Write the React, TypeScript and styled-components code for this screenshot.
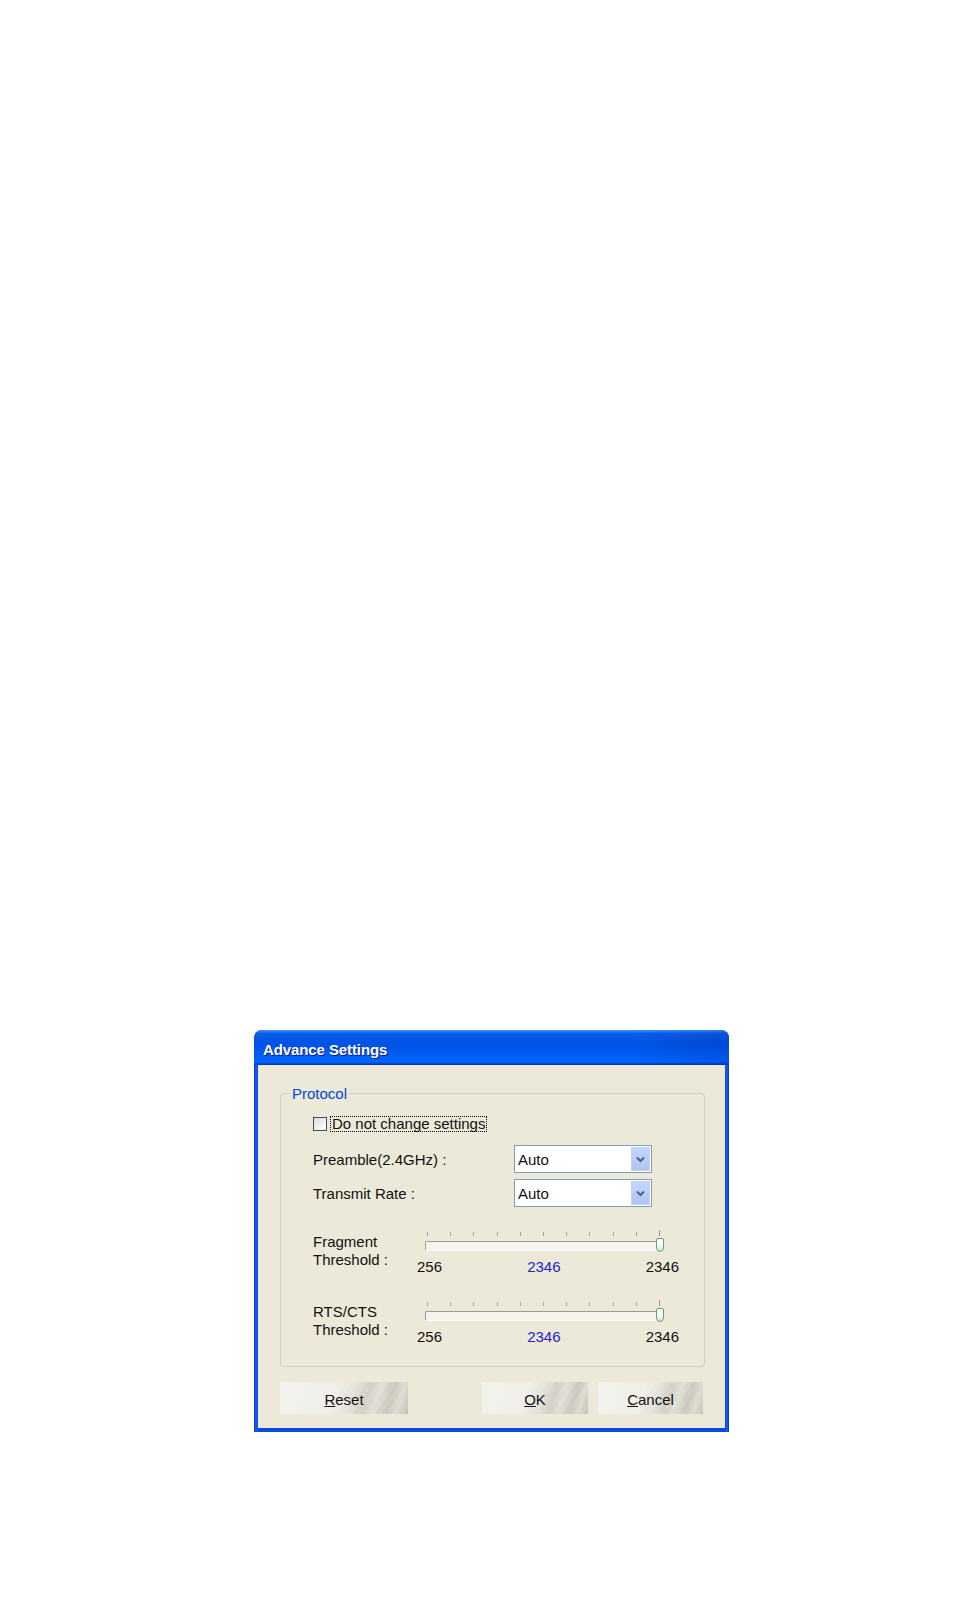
import React from "react";
import styled, { createGlobalStyle } from "styled-components";

const Global = createGlobalStyle`
  html, body { margin: 0; padding: 0; background: #ffffff; }
  body { font-family: "Liberation Sans", Arial, sans-serif; color: #000; }
`;

const Page = styled.div`
  width: 954px;
  min-height: 1612px;
  box-sizing: border-box;
  padding: 1030px 0 0 254px;
  background: #ffffff;
`;

const Window = styled.div`
  width: 475px;
  display: flex;
  flex-direction: column;
  border-radius: 8px 8px 0 0;
  overflow: hidden;
  background: linear-gradient(to right, #0831d9 0px, #1660ee 2px, #0a49e0 4px, #0a49e0 calc(100% - 4px), #1660ee calc(100% - 2px), #0831d9 100%);
`;

const TitleBar = styled.div`
  height: 35px;
  box-sizing: border-box;
  display: flex;
  align-items: center;
  padding: 3px 0 0 9px;
  background:
    linear-gradient(to right, rgba(0, 30, 120, 0) 0%, rgba(0, 30, 120, 0) 80%, rgba(0, 30, 140, 0.18) 100%),
    linear-gradient(to bottom, #3d95ff 0%, #0a5ce8 10%, #0052e6 40%, #0062f8 85%, #0066ff 91%, #0052e0 95%, #0039c8 97%, #0039c8 100%);
  color: #ffffff;
  font-weight: bold;
  font-size: 15px;
  letter-spacing: -0.1px;
  text-shadow: 1px 1px 0 #0a1a8a;
`;

const Body = styled.div`
  margin: 0 4px 4px;
  background: #ece9d8;
  padding: 20px 20px 14px 22px;
  display: flex;
  flex-direction: column;
`;

const Group = styled.fieldset`
  margin: 0;
  padding: 14px 20px 21px 0;
  border: 1px solid #d0d0bf;
  border-radius: 4px;
  min-width: 0;
`;

const Legend = styled.legend`
  margin-left: 9px;
  padding: 0 2px;
  color: #0046d5;
  font-size: 15px;
  line-height: 17px;
`;

const Content = styled.div`
  padding-left: 32px;
  display: flex;
  flex-direction: column;
  font-size: 15px;
  color: #111;
`;

const CheckRow = styled.div`
  height: 16px;
  display: flex;
  align-items: center;
`;

const CheckBox = styled.span`
  width: 14px;
  height: 14px;
  box-sizing: border-box;
  border: 1px solid #3b4f6a;
  background: linear-gradient(135deg, #dcdcd7 0%, #f6f6f3 70%, #ffffff 100%);
`;

const FocusLabel = styled.span`
  margin-left: 3px;
  padding: 0 1px;
  border: 1px dotted #000;
  line-height: 14px;
`;

const FieldRow = styled.div<{ $top: number }>`
  margin-top: ${(p) => p.$top}px;
  height: 28px;
  display: flex;
  align-items: center;
`;

const FieldLabel = styled.span`
  width: 201px;
  line-height: 17px;
`;

const Select = styled.div`
  width: 138px;
  height: 28px;
  box-sizing: border-box;
  border: 1px solid #7f9db9;
  background: #ffffff;
  display: flex;
  align-items: center;
  justify-content: space-between;
  padding: 1px 1px 1px 3px;
`;

const SelectValue = styled.span`
  line-height: 17px;
`;

const SelectButton = styled.span`
  width: 19px;
  height: 24px;
  box-sizing: border-box;
  border: 1px solid #c3d3f7;
  background: linear-gradient(to bottom, #c6d6fb 0%, #b8cbf6 60%, #b0c4f2 100%);
  display: flex;
  align-items: center;
  justify-content: center;
`;

const SliderBlock = styled.div<{ $top: number }>`
  margin-top: ${(p) => p.$top}px;
  display: grid;
  grid-template-columns: 112px 238px;
`;

const SliderLabel = styled.div`
  padding-top: 3px;
  line-height: 18px;
`;

const SliderCol = styled.div`
  display: flex;
  flex-direction: column;
`;

const Ticks = styled.div`
  height: 6px;
  display: flex;
  justify-content: space-between;
  align-items: flex-end;
  padding: 0 3px 0 2px;
`;

const Tick = styled.span<{ $end?: boolean }>`
  width: 1px;
  height: ${(p) => (p.$end ? 6 : 4)}px;
  background: ${(p) => (p.$end ? "#b48c8c" : "#a8a8a0")};
`;

const Track = styled.div`
  position: relative;
  margin-top: 5px;
  height: 10px;
  box-sizing: border-box;
  border-top: 1px solid #9c9c96;
  border-left: 1px solid #9c9c96;
  border-bottom: 1px solid #ffffff;
  border-right: 1px solid #ffffff;
  background: #f4f3ee;
  border-radius: 2px;
`;

const Thumb = styled.span`
  position: absolute;
  right: -2px;
  top: -4px;
  width: 8px;
  height: 14px;
  box-sizing: border-box;
  border: 1px solid #6f9a80;
  border-radius: 2px 2px 4px 4px;
  background: linear-gradient(to bottom, #ffffff 0%, #f3f6f1 60%, #d6e6d8 100%);
`;

const Values = styled.div`
  margin-top: 7px;
  margin-left: -8px;
  width: 262px;
  display: flex;
  justify-content: space-between;
  line-height: 17px;
`;

const Value = styled.span<{ $blue?: boolean }>`
  color: ${(p) => (p.$blue ? "#2424c8" : "#111")};
`;

const ButtonRow = styled.div`
  margin-top: 15px;
  display: flex;
  align-items: center;
  padding-right: 2px;
`;

const Spacer = styled.div`
  flex: 1;
`;

const Button = styled.div<{ $w: number }>`
  width: ${(p) => p.$w}px;
  height: 32px;
  box-sizing: border-box;
  display: flex;
  align-items: center;
  justify-content: center;
  font-size: 15px;
  color: #111;
  padding-top: 3px;
  background:
    repeating-linear-gradient(125deg, rgba(255, 255, 255, 0) 0px, rgba(255, 255, 255, 0) 3px, rgba(255, 255, 255, 0.12) 4px, rgba(255, 255, 255, 0) 6px),
    linear-gradient(108deg, #f3f2ed 0%, #efeee8 42%, #e4e2da 55%, #d2cfc5 66%, #e1dfd7 74%, #cac7bc 84%, #dedbd2 91%, #c3bfb4 100%);
  & + & {
    margin-left: 10px;
  }
`;

const U = styled.span`
  text-decoration: underline;
`;

const Chevron = () => (
  <svg width="9" height="7" viewBox="0 0 9 7">
    <polyline points="1,1.5 4.5,5 8,1.5" fill="none" stroke="#4d6185" strokeWidth="2" />
  </svg>
);

const Slider = ({ top, label1, label2 }: { top: number; label1: string; label2: string }) => (
  <SliderBlock $top={top}>
    <SliderLabel>
      {label1}
      <br />
      {label2}
    </SliderLabel>
    <SliderCol>
      <Ticks>
        {Array.from({ length: 11 }).map((_, i) => (
          <Tick key={i} $end={i === 10} />
        ))}
      </Ticks>
      <Track>
        <Thumb />
      </Track>
      <Values>
        <Value>256</Value>
        <Value $blue>2346</Value>
        <Value>2346</Value>
      </Values>
    </SliderCol>
  </SliderBlock>
);

export default function App() {
  return (
    <Page>
      <Global />
      <Window>
        <TitleBar>Advance Settings</TitleBar>
        <Body>
          <Group>
            <Legend>Protocol</Legend>
            <Content>
              <CheckRow>
                <CheckBox />
                <FocusLabel>Do not change settings</FocusLabel>
              </CheckRow>
              <FieldRow $top={13}>
                <FieldLabel>Preamble(2.4GHz) :</FieldLabel>
                <Select>
                  <SelectValue>Auto</SelectValue>
                  <SelectButton>
                    <Chevron />
                  </SelectButton>
                </Select>
              </FieldRow>
              <FieldRow $top={6}>
                <FieldLabel>Transmit Rate :</FieldLabel>
                <Select>
                  <SelectValue>Auto</SelectValue>
                  <SelectButton>
                    <Chevron />
                  </SelectButton>
                </Select>
              </FieldRow>
              <Slider top={23} label1="Fragment" label2="Threshold :" />
              <Slider top={25} label1="RTS/CTS" label2="Threshold :" />
            </Content>
          </Group>
          <ButtonRow>
            <Button $w={128}>
              <span>
                <U>R</U>eset
              </span>
            </Button>
            <Spacer />
            <Button $w={106}>
              <span>
                <U>O</U>K
              </span>
            </Button>
            <Button $w={105}>
              <span>
                <U>C</U>ancel
              </span>
            </Button>
          </ButtonRow>
        </Body>
      </Window>
    </Page>
  );
}
